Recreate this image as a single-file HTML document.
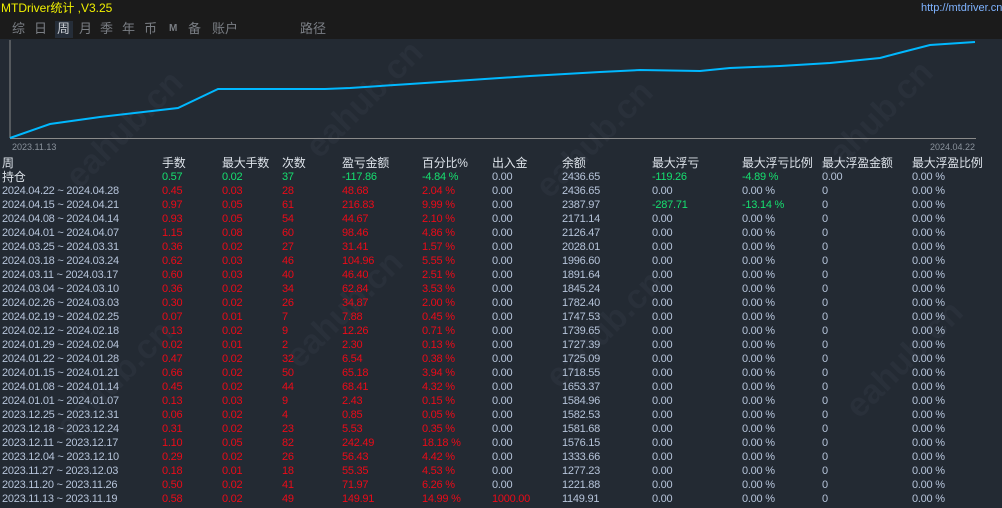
<!DOCTYPE html>
<html><head><meta charset="utf-8"><style>
html,body{margin:0;padding:0;width:1002px;height:508px;overflow:hidden;background:#232a33;font-family:"Liberation Sans","Noto Sans CJK SC",sans-serif;}
#top{position:absolute;left:0;top:0;width:1002px;height:39px;background:#1b1b1b;}
.t{position:absolute;white-space:nowrap;font-size:11px;line-height:14px;}
.r{position:absolute;left:0;width:1002px;height:14px;}
.r span{position:absolute;top:0;white-space:nowrap;font-size:11px;line-height:14px;letter-spacing:-0.25px}
.d{color:#b6c4da}.red{color:#ec0a18}.g{color:#16e070}.w{color:#dde3ea}
.wm{position:absolute;color:#29303a;font-size:34px;font-weight:bold;transform:rotate(-45deg);white-space:nowrap;font-family:"Liberation Sans",sans-serif}
</style></head><body>
<div id="top"></div>
<div class="t" style="left:1px;top:1px;color:#f0f000;font-size:12px">MTDriver统计 ,V3.25</div>
<div class="t" style="left:921px;top:1px;color:#7fb3ff;font-size:11px">http://mtdriver.cn</div>
<div style="position:absolute;left:55px;top:21px;width:18px;height:17px;background:#252d38"></div>
<div class="t" style="top:22px;left:12px;color:#7a7e84;font-size:13px">
<span style="position:absolute;left:0">综</span><span style="position:absolute;left:22px">日</span><span style="position:absolute;left:45px;color:#c8ccd2">周</span><span style="position:absolute;left:67px">月</span><span style="position:absolute;left:88px">季</span><span style="position:absolute;left:110px">年</span><span style="position:absolute;left:132px">币</span><span style="position:absolute;left:157px;font-size:10px;font-weight:bold">M</span><span style="position:absolute;left:176px">备</span><span style="position:absolute;left:200px">账户</span><span style="position:absolute;left:288px">路径</span>
</div>
<div class="wm" style="left:50px;top:110px">eahub.cn</div>
<div class="wm" style="left:290px;top:80px">eahub.cn</div>
<div class="wm" style="left:520px;top:120px">eahub.cn</div>
<div class="wm" style="left:800px;top:100px">eahub.cn</div>
<div class="wm" style="left:270px;top:290px">eahub.cn</div>
<div class="wm" style="left:530px;top:310px">eahub.cn</div>
<div class="wm" style="left:830px;top:340px">eahub.cn</div>
<div class="wm" style="left:40px;top:360px">eahub.cn</div>
<svg style="position:absolute;left:0;top:0" width="1002" height="160">
<line x1="10" y1="40" x2="10" y2="138" stroke="#8a8a8a" stroke-width="1"/>
<line x1="10" y1="138.5" x2="976" y2="138.5" stroke="#8a8a8a" stroke-width="1"/>
<polyline fill="none" stroke="#00b8ff" stroke-width="2" points="10,138 50,124 100,117 178,108 218,89 325,89 350,88 410,84 470,80 530,76 600,72 640,70 700,71 730,68 780,66 830,63 880,58 895,54 930,45 975,42"/>
</svg>
<div class="t" style="left:12px;top:140px;color:#8a929c;font-size:9px">2023.11.13</div>
<div class="t" style="left:930px;top:140px;color:#8a929c;font-size:9px">2024.04.22</div>
<div id="rows"></div>
<div class="r" style="top:156px;font-size:12px"><span class="w" style="left:2px;font-size:12px">周</span><span class="w" style="left:162px;font-size:12px">手数</span><span class="w" style="left:222px;font-size:12px">最大手数</span><span class="w" style="left:282px;font-size:12px">次数</span><span class="w" style="left:342px;font-size:12px">盈亏金额</span><span class="w" style="left:422px;font-size:12px">百分比%</span><span class="w" style="left:492px;font-size:12px">出入金</span><span class="w" style="left:562px;font-size:12px">余额</span><span class="w" style="left:652px;font-size:12px">最大浮亏</span><span class="w" style="left:742px;font-size:12px">最大浮亏比例</span><span class="w" style="left:822px;font-size:12px">最大浮盈金额</span><span class="w" style="left:912px;font-size:12px">最大浮盈比例</span></div>
<div class="r" style="top:170px"><span class="w" style="left:2px;font-size:12px">持仓</span><span class="g" style="left:162px">0.57</span><span class="g" style="left:222px">0.02</span><span class="g" style="left:282px">37</span><span class="g" style="left:342px">-117.86</span><span class="g" style="left:422px">-4.84 %</span><span class="d" style="left:492px">0.00</span><span class="d" style="left:562px">2436.65</span><span class="g" style="left:652px">-119.26</span><span class="g" style="left:742px">-4.89 %</span><span class="d" style="left:822px">0.00</span><span class="d" style="left:912px">0.00 %</span></div>
<script>
var D=[["2024.04.22 ~ 2024.04.28","0.45","0.03","28","48.68","2.04 %","0.00","2436.65","0.00","0.00 %"],
["2024.04.15 ~ 2024.04.21","0.97","0.05","61","216.83","9.99 %","0.00","2387.97","-287.71","-13.14 %"],
["2024.04.08 ~ 2024.04.14","0.93","0.05","54","44.67","2.10 %","0.00","2171.14","0.00","0.00 %"],
["2024.04.01 ~ 2024.04.07","1.15","0.08","60","98.46","4.86 %","0.00","2126.47","0.00","0.00 %"],
["2024.03.25 ~ 2024.03.31","0.36","0.02","27","31.41","1.57 %","0.00","2028.01","0.00","0.00 %"],
["2024.03.18 ~ 2024.03.24","0.62","0.03","46","104.96","5.55 %","0.00","1996.60","0.00","0.00 %"],
["2024.03.11 ~ 2024.03.17","0.60","0.03","40","46.40","2.51 %","0.00","1891.64","0.00","0.00 %"],
["2024.03.04 ~ 2024.03.10","0.36","0.02","34","62.84","3.53 %","0.00","1845.24","0.00","0.00 %"],
["2024.02.26 ~ 2024.03.03","0.30","0.02","26","34.87","2.00 %","0.00","1782.40","0.00","0.00 %"],
["2024.02.19 ~ 2024.02.25","0.07","0.01","7","7.88","0.45 %","0.00","1747.53","0.00","0.00 %"],
["2024.02.12 ~ 2024.02.18","0.13","0.02","9","12.26","0.71 %","0.00","1739.65","0.00","0.00 %"],
["2024.01.29 ~ 2024.02.04","0.02","0.01","2","2.30","0.13 %","0.00","1727.39","0.00","0.00 %"],
["2024.01.22 ~ 2024.01.28","0.47","0.02","32","6.54","0.38 %","0.00","1725.09","0.00","0.00 %"],
["2024.01.15 ~ 2024.01.21","0.66","0.02","50","65.18","3.94 %","0.00","1718.55","0.00","0.00 %"],
["2024.01.08 ~ 2024.01.14","0.45","0.02","44","68.41","4.32 %","0.00","1653.37","0.00","0.00 %"],
["2024.01.01 ~ 2024.01.07","0.13","0.03","9","2.43","0.15 %","0.00","1584.96","0.00","0.00 %"],
["2023.12.25 ~ 2023.12.31","0.06","0.02","4","0.85","0.05 %","0.00","1582.53","0.00","0.00 %"],
["2023.12.18 ~ 2023.12.24","0.31","0.02","23","5.53","0.35 %","0.00","1581.68","0.00","0.00 %"],
["2023.12.11 ~ 2023.12.17","1.10","0.05","82","242.49","18.18 %","0.00","1576.15","0.00","0.00 %"],
["2023.12.04 ~ 2023.12.10","0.29","0.02","26","56.43","4.42 %","0.00","1333.66","0.00","0.00 %"],
["2023.11.27 ~ 2023.12.03","0.18","0.01","18","55.35","4.53 %","0.00","1277.23","0.00","0.00 %"],
["2023.11.20 ~ 2023.11.26","0.50","0.02","41","71.97","6.26 %","0.00","1221.88","0.00","0.00 %"],
["2023.11.13 ~ 2023.11.19","0.58","0.02","49","149.91","14.99 %","1000.00","1149.91","0.00","0.00 %"]];
var X=[2,162,222,282,342,422,492,562,652,742],h="";
D.forEach(function(r,i){h+='<div class="r" style="top:'+(184+i*14)+'px">';
r.forEach(function(v,j){var c=j==0?"d":(j<6?"red":(j==6?(v=="0.00"?"d":"red"):(j>=8&&v.charAt(0)=="-"?"g":"d")));h+='<span class="'+c+'" style="left:'+X[j]+'px">'+v+'</span>';});
h+='<span class="d" style="left:822px">0</span><span class="d" style="left:912px">0.00 %</span></div>';});
document.getElementById("rows").innerHTML=h;
</script>
</body></html>
